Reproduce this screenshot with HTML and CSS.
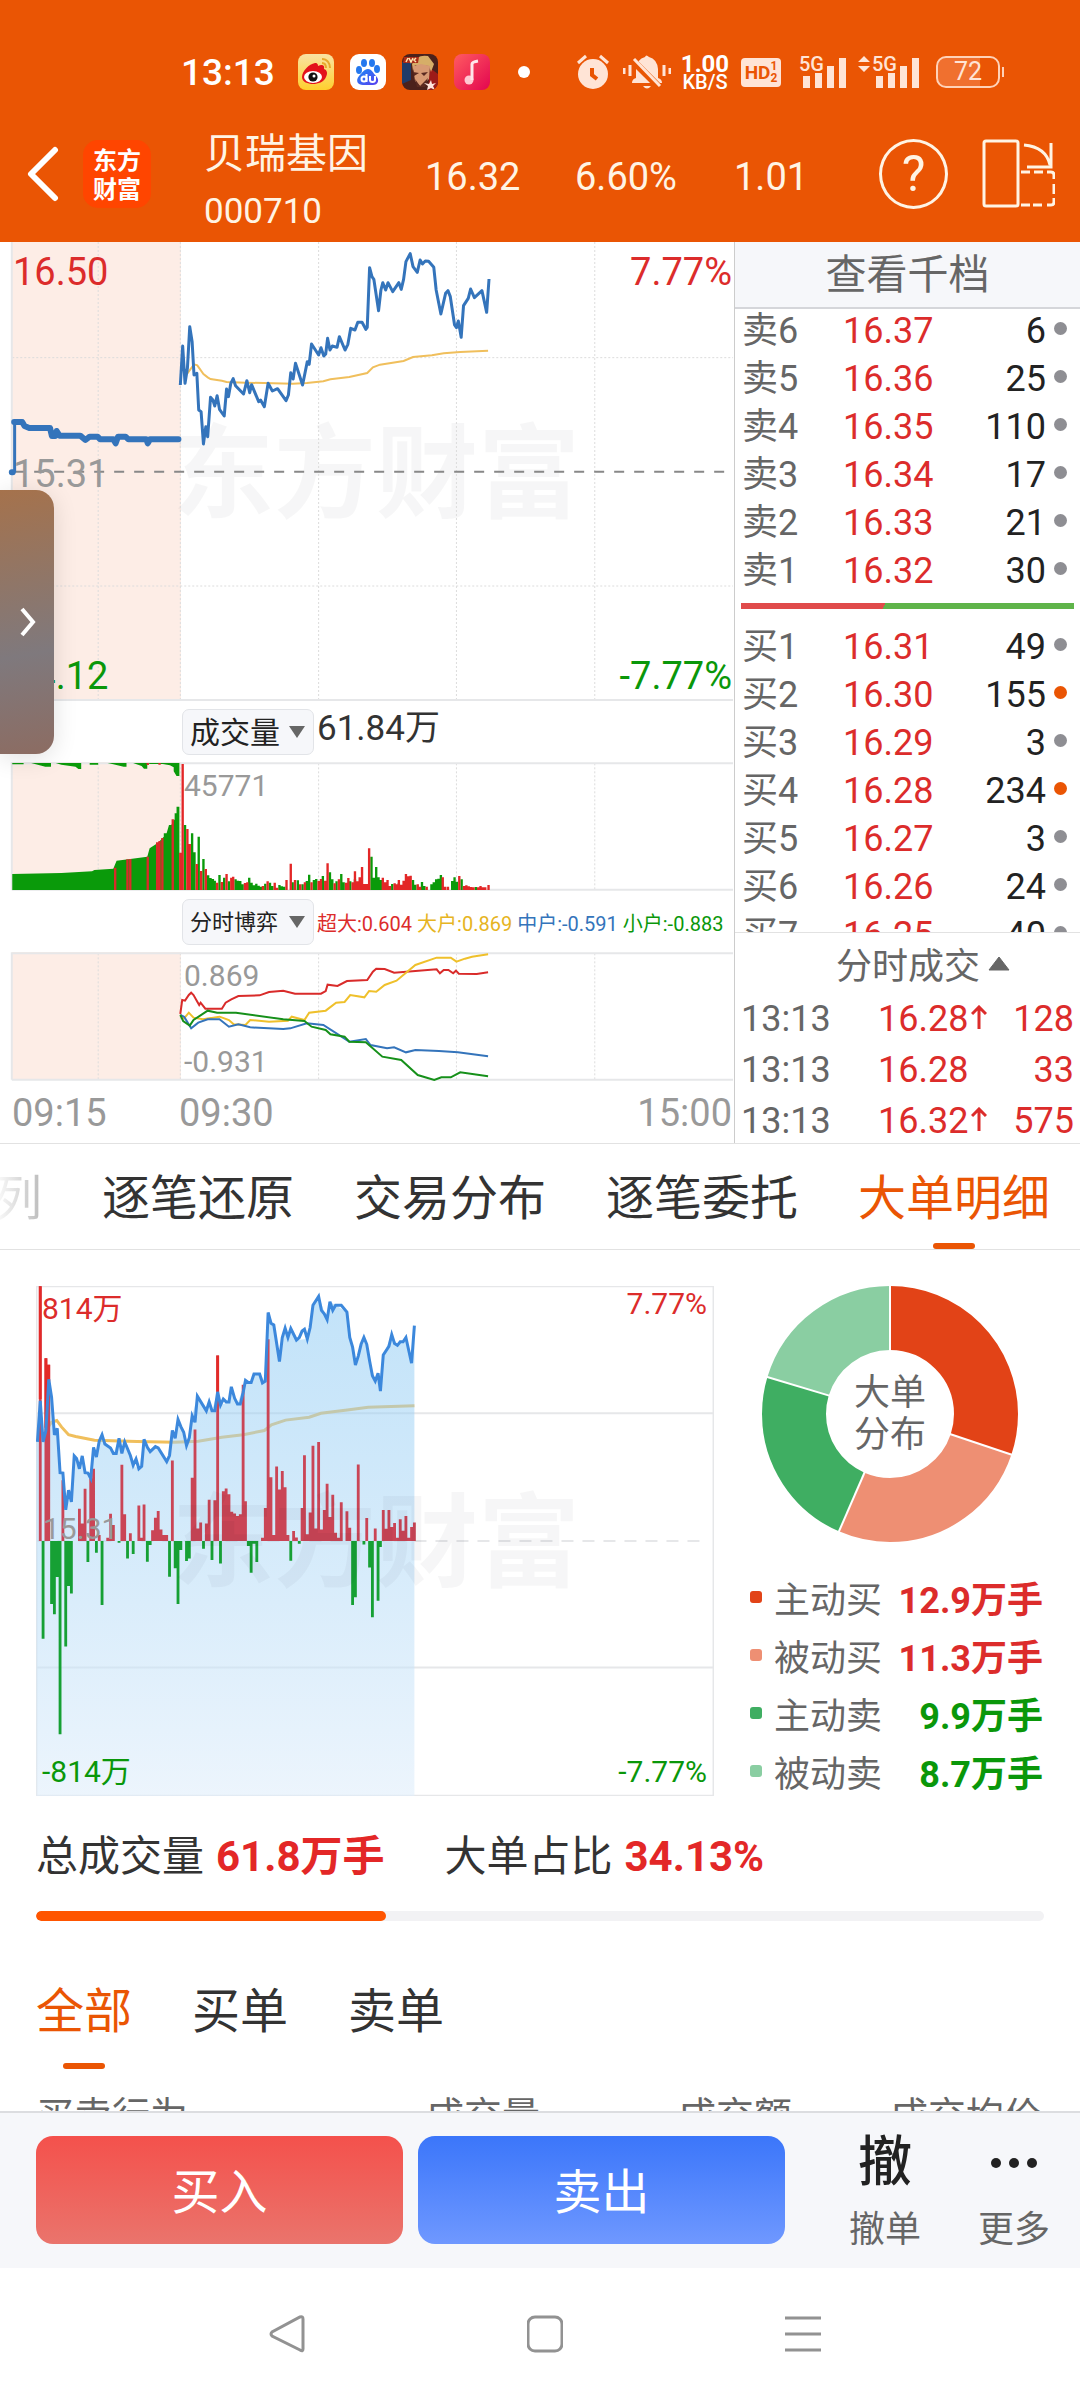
FILE: index.html
```html
<!DOCTYPE html>
<html lang="zh-CN">
<head>
<meta charset="utf-8">
<meta name="viewport" content="width=device-width">
<title>贝瑞基因 000710</title>
<link rel="stylesheet" href="styles.css">
</head>
<body>
<header class="top">
  <div class="status">
    <span class="clock">13:13</span>
    <div class="apps">
      <svg width="36" height="36" viewBox="0 0 36 36"><defs><linearGradient id="wb" x2="0" y2="1"><stop stop-color="#f9e3a4"/><stop offset="1" stop-color="#ffd02e"/></linearGradient></defs><rect width="36" height="36" rx="8" fill="url(#wb)"/><path d="M4 23c0-6 7-13 13-14 3 0 3 2 3 3 4-2 7-1 6 3 3 1 4 4 2 8-2 5-8 7-13 7S4 28 4 23z" fill="#e3121b"/><ellipse cx="15" cy="23" rx="9" ry="6" fill="#fff"/><circle cx="15" cy="23" r="4.600" fill="#111"/><circle cx="16" cy="22" r="1.500" fill="#fff"/><path d="M24 5c5 0 8 4 8 9M24 9c3 0 4 2 4 5" fill="none" stroke="#e8a92c" stroke-width="2"/></svg>
      <svg width="36" height="36" viewBox="0 0 36 36"><defs><linearGradient id="bd" x1="0" x2="1" y2="1"><stop stop-color="#1b8af5"/><stop offset="1" stop-color="#5a3df0"/></linearGradient></defs><rect width="36" height="36" rx="9" fill="#fff"/><g fill="#2478ee"><ellipse cx="9" cy="16" rx="3" ry="4"/><ellipse cx="14" cy="9" rx="3" ry="4"/><ellipse cx="22" cy="9" rx="3" ry="4"/><ellipse cx="27" cy="15" rx="3" ry="4"/></g><path d="M18 15c4 0 5 4 8 7 4 4 2 9-3 9H13c-5 0-8-4-4-9 3-3 5-7 9-7z" fill="url(#bd)"/><g fill="none" stroke="#fff" stroke-width="2"><circle cx="14" cy="25" r="2.500"/><path d="M16.500 20v8M20 22v4q0 2 2.500 2t2.500-2v-4"/></g></svg>
      <svg width="36" height="36" viewBox="0 0 36 36"><defs><clipPath id="hc"><rect width="36" height="36" rx="8"/></clipPath></defs><g clip-path="url(#hc)"><rect width="36" height="36" fill="#4b211b"/><path d="M0 8h9v18L0 30z" fill="#203b68"/><path d="M28 14l8 6v16H26z" fill="#9d1b18"/><path d="M10 10Q15 0 26 2l6 8-3 8-2-6-14-1-2 6z" fill="#d6ae68"/><path d="M11 12l8-2 9 2-1 13-8 8-6-6z" fill="#d79a74"/><path d="M11 18l6 1-5 3zM19 19l7-1-4 4zM17 28h6M13 25l5 7 8-8-3 9h-8z" fill="#5a2a20"/><path d="M2 3h15l-1 6H1z" fill="#a92b18"/><path d="M4 8l2-4M7 4l2 4 2-4M14 4l-2 2 2 2" stroke="#ffe4ae" stroke-width="1.500" fill="none"/><path d="M29 26l1 4 4-1-3 3 2 4-4-2-4 2 1-4-4-3 5 1z" fill="#ffe5dc"/></g></svg>
      <svg width="36" height="36" viewBox="0 0 36 36"><defs><linearGradient id="mu" x2="1" y2="1"><stop stop-color="#ff5b61"/><stop offset="1" stop-color="#e3054f"/></linearGradient></defs><rect width="36" height="36" rx="8" fill="url(#mu)"/><circle cx="15" cy="26" r="4.500" fill="#ffc9d2"/><path d="M18 26V10q0-2 6-3" fill="none" stroke="#ffe6ea" stroke-width="3"/></svg>
    </div>
    <span class="more-dot"></span>
    <div class="signals">
      <svg width="32" height="36" viewBox="0 0 32 36"><circle cx="16" cy="20" r="15" fill="#ffe4d6"/><path d="M1 9l8-7M31 9l-8-7" stroke="#ffe4d6" stroke-width="3"/><path d="M15 14v7l5 4" fill="none" stroke="#e95503" stroke-width="4"/></svg>
      <svg width="48" height="36" viewBox="0 0 48 36"><path d="M9 29q0-4 4-5V15Q14 5 22 3q1-3 4 0 8 2 9 12v9q4 1 4 5zM20 32h8q-4 5-8 0z" fill="#ffe4d6"/><path d="M9 6l28 28" stroke="#e95503" stroke-width="7"/><path d="M11 5l26 27M1 14v6M7 11v11M41 11v11M47 14v6" stroke="#ffe4d6" stroke-width="3"/></svg>
      <span class="speed"><b>1.00</b><small>KB/S</small></span>
      <span class="hd">HD<span><i>1</i><i>2</i></span></span>
      <span class="cell"><em>5G</em><svg width="44" height="30" viewBox="0 0 44 30" fill="#ffe4d6"><path d="M0 18h7v12H0zM12 15h7v15h-7zM24 8h7v22h-7zM36 0h7v30h-7z"/></svg></span>
      <span class="cell cell-2"><svg class="updown" width="12" height="16" viewBox="0 0 12 16"><path d="M6 0l6 6H0zM6 16l6-6H0z" fill="#ffe4d6"/></svg><em>5G</em><svg width="44" height="30" viewBox="0 0 44 30" fill="#ffe4d6"><path d="M0 18h7v12H0zM12 15h7v15h-7zM24 8h7v22h-7zM36 0h7v30h-7z"/></svg></span>
      <span class="battery">72</span>
    </div>
  </div>
  <nav class="nav">
    <button class="back" aria-label="返回"><svg width="32" height="56" viewBox="0 0 32 56"><path d="M28 4L4 28l24 24" fill="none" stroke="#fff" stroke-width="6" stroke-linecap="round" stroke-linejoin="round"/></svg></button>
    <span class="brand">东方<br>财富</span>
    <h1 class="stock">贝瑞基因<span>000710</span></h1>
    <span class="fig">16.32</span>
    <span class="fig">6.60%</span>
    <span class="fig">1.01</span>
    <button class="help" aria-label="帮助">?</button>
    <button aria-label="横屏"><svg width="73" height="70" viewBox="0 0 73 70" fill="none" stroke="#fff4e4" stroke-width="3"><rect x="2" y="2" width="34" height="65" rx="2"/><path d="M42 6q22 2 26 20M69 4v24H45"/><path d="M39 33h9M52 33h9M65 33h4q3 0 3 3v4M72 45v10M72 59v4q0 3-3 3h-4M60 66h-9M48 66h-9"/></svg></button>
  </nav>
</header>

<main>
<section class="quote">
  <div class="charts">
    <div class="chart price">
      <span class="shade"></span>
      <span class="mark">东方财富</span>
      <svg viewBox="0 6 1555 1380" preserveAspectRatio="none">
        <path class="grid dots" d="M208 6V1380M382 6V1380M675 6V1380M967 6V1380M1260 6V1380M26 353H1553M26 1038H1553"/>
        <path class="grid" d="M25 6V1380H1553"/>
        <path d="M30 695H1553" class="base"/>
        <path class="avg" d="M397 400L411 373L418 376L431 402L440 412L446 417L470 422L480 426L520 428L620 431L650 429L685 424L700 418L740 411L778 399L790 382L805 374L855 363L875 351L915 346L940 340L975 336L1034 332"/>
        <path class="blue w2" d="M382 435L387 318L392 430L397 385L402 260L407 305L411 405L417 400L421 510L426 515L431 612L436 560L440 590L446 472L451 480L455 498L460 467L465 508L475 528L480 447L484 470L489 430L494 416L499 437L516 462L523 422L529 458L533 434L548 485L552 480L560 500L568 430L577 453L588 446L606 482L611 465L616 398L621 417L626 370L641 435L651 365L655 373L660 312L675 345L680 323L686 348L690 342L694 295L699 330L704 318L714 322L719 290L731 330L737 313L743 265L752 270L758 247L767 247L775 268L778 262L783 83L788 110L792 118L802 212L807 150L811 128L817 150L822 128L832 155L845 128L850 148L855 118L860 65L869 41L875 80L884 97L890 60L895 72L901 63L908 64L919 82L924 150L934 222L944 160L949 152L954 170L963 255L967 263L971 243L977 292L982 197L992 175L997 147L1005 173L1021 152L1031 217L1036 117"/>
        <path class="blue w2" d="M31 697V546"/>
        <path class="blue w6" d="M25 697H27M30 546H47L52 558L62 564H106L110 588H117L120 573L126 587H170L181 600L190 590H207L212 598H240L245 610L250 590H266L272 598H310L313 610L318 598H378"/>
      </svg>
      <span class="lbl red tl">16.50</span><span class="lbl red tr">7.77%</span>
      <span class="lbl gray ml">15.31</span>
      <span class="lbl green bl">14.12</span><span class="lbl green br">-7.77%</span>
    </div>
    <div class="ind">
      <label class="pick"><select aria-label="指标一"><option>成交量</option></select></label>
      <span class="vol-value">61.84万</span>
    </div>
    <div class="chart sub">
      <span class="shade"></span>
      <svg viewBox="0 216 1555 390" preserveAspectRatio="none">
        <path class="grid dots" d="M208 220V598M382 220V598M675 220V598M967 220V598M1260 220V598"/>
        <path class="grid" d="M25 600V220H1553M25 599H1553"/>
        <path fill="#0a9a0a" d="M26 600V552L130 549L195 544L200 540L240 536L247 512L280 506L312 500L317 475L335 458L347 440V430H353L358 405H363L370 388V370H374V350H380V600zM26 219H50V223H26zM66 219H108V230H96L80 224zM118 219H172V237H166L160 230L130 224zM190 219H208V224H190zM228 219H268V230H262L240 223zM282 219H312V236H305L300 228zM316 219H380V258H374L368 244V232L360 226L345 222H316z"/>
        <path stroke="#d92b2a" stroke-width="5" d="M244 600V533M270 600V508M276 600V507M313 600V500M333 600V457M338 600V453M344 600V444M366 600V388M313 219V225M338 219V224"/>
        <path stroke="#0a9a0a" stroke-width="5" d="M392 600V405M407 600V430M412 600V487M421 600V440M431 600V507M441 600V556M446 600V564M451 600V567M455 600V572M465 600V555M475 600V563M485 600V574M499 600V568M504 600V572M509 600V573M514 600V583M528 600V563M533 600V578M538 600V586M543 600V581M548 600V587M553 600V590M562 600V581M572 600V578M577 600V588M592 600V585M597 600V589M602 600V590M620 600V577M631 600V571M641 600V583M650 600V573M655 600V554M665 600V570M670 600V567M684 600V558M699 600V547M704 600V568M713 600V574M723 600V552M728 600V577M742 600V574M752 600V568M787 600V500M792 600V563M797 600V531M802 600V562M807 600V570M831 600V582M845 600V580M875 600V570M880 600V584M894 600V576M899 600V588M914 600V583M919 600V577M924 600V568M929 600V566M934 600V555M958 600V573M963 600V562M968 600V575M978 600V568M1008 600V591"/>
        <path stroke="#e32727" stroke-width="5" d="M382 600V488M387 600V222M397 600V417M402 600V462M417 600V522M426 600V543M436 600V537M460 600V578M470 600V576M480 600V552M490 600V563M494 600V560M519 600V579M524 600V577M557 600V588M567 600V574M582 600V578M587 600V593M607 600V570M616 600V521M625 600V570M636 600V583M646 600V577M660 600V577M675 600V573M680 600V567M689 600V572M694 600V520M709 600V580M718 600V568M733 600V578M738 600V564M747 600V577M752 600V544M757 600V574M762 600V562M767 600V531M772 600V582M777 600V582M782 600V475M811 600V563M816 600V577M821 600V570M826 600V588M836 600V580M841 600V583M845 600V570M850 600V584M855 600V572M860 600V552M865 600V559M870 600V557M885 600V583M890 600V590M904 600V590M938 600V562M943 600V590M949 600V590M973 600V558M983 600V588M988 600V586M993 600V589M998 600V591M1003 600V592M1013 600V592M1018 600V588M1023 600V592M1028 600V592M1035 600V585"/>
      </svg>
      <span class="tag hi">45771</span>
    </div>
    <div class="ind">
      <label class="pick narrow"><select aria-label="指标二"><option>分时博弈</option></select></label>
      <span class="flow"><span class="red">超大:0.604</span><span class="yellow">大户:0.869</span><span class="bluet">中户:-0.591</span><span class="green">小户:-0.883</span></span>
    </div>
    <div class="chart sub">
      <span class="shade"></span>
      <svg viewBox="0 786 1555 390" preserveAspectRatio="none">
        <path class="grid dots" d="M208 790V1168M382 790V1168M675 790V1168M967 790V1168M1260 790V1168"/>
        <path class="grid" d="M25 1169V790H1553M25 1169H1553"/>
        <g class="w2" fill="none">
        <path stroke="#d92b2a" d="M382 972L386 930L392 932L400 915L405 908L410 915L418 935L422 945L425 938L435 956H470L478 938L490 928L505 918L550 916L570 906L600 902L625 911H680L690 903L694 884L715 888L735 873L778 870L790 845L797 836L815 837L835 848L880 843L925 838L932 850L940 840H950L960 850L966 842L972 851L1010 852L1034 847"/>
        <path stroke="#efc02b" d="M382 975L390 985L400 968L410 983L430 988L465 980L485 990L495 1003L520 1005L530 990L570 995L610 992L618 980L645 990L655 968L690 962L712 938L730 936L742 915L772 922L782 903L797 905L815 885L840 872L880 825L925 803H955L967 815L985 806L1000 800L1034 793"/>
        <path stroke="#3474bb" d="M382 975L390 980L405 1015L420 998L440 988L465 988L485 1010L505 1003L530 1012L600 1017L615 1015L650 1000L685 1005L740 1055L775 1047L785 1065L820 1075L835 1072L860 1087L880 1080L930 1083L970 1087L1034 1099"/>
        <path stroke="#16901a" d="M382 975L388 993L402 1007L410 990L440 962L460 968H500L600 988L645 993L660 1010L690 1020L700 1033L730 1040L740 1055L775 1057L810 1100L850 1110L885 1155L920 1170L935 1162H955L975 1147L1034 1159"/>
        </g>
      </svg>
      <span class="tag hi">0.869</span><span class="tag lo">-0.931</span>
    </div>
    <div class="times"><span>09:15</span><span>09:30</span><span>15:00</span></div>
  </div>
  <aside class="book">
    <button class="depth">查看千档</button>
    <div class="levels">
      <table>
        <tr><th>卖6</th><td>16.37</td><td>6</td></tr>
        <tr><th>卖5</th><td>16.36</td><td>25</td></tr>
        <tr><th>卖4</th><td>16.35</td><td>110</td></tr>
        <tr><th>卖3</th><td>16.34</td><td>17</td></tr>
        <tr><th>卖2</th><td>16.33</td><td>21</td></tr>
        <tr><th>卖1</th><td>16.32</td><td>30</td></tr>
      </table>
      <div class="ratio"></div>
      <table>
        <tr><th>买1</th><td>16.31</td><td>49</td></tr>
        <tr class="hot"><th>买2</th><td>16.30</td><td>155</td></tr>
        <tr><th>买3</th><td>16.29</td><td>3</td></tr>
        <tr class="hot"><th>买4</th><td>16.28</td><td>234</td></tr>
        <tr><th>买5</th><td>16.27</td><td>3</td></tr>
        <tr><th>买6</th><td>16.26</td><td>24</td></tr>
        <tr><th>买7</th><td>16.25</td><td>40</td></tr>
      </table>
    </div>
    <button class="ticks-head">分时成交<svg width="22" height="15" viewBox="0 0 22 15"><path d="M11 1l10 13H1z" fill="#666" stroke="#666" stroke-linejoin="round"/></svg></button>
    <table class="ticks">
      <tr><th>13:13</th><td>16.28<svg width="16" height="24" viewBox="0 0 16 24"><path d="M8 24V3M1 9l7-7 7 7"/></svg></td><td>128</td></tr>
      <tr><th>13:13</th><td>16.28</td><td>33</td></tr>
      <tr><th>13:13</th><td>16.32<svg width="16" height="24" viewBox="0 0 16 24"><path d="M8 24V3M1 9l7-7 7 7"/></svg></td><td>575</td></tr>
    </table>
  </aside>
  <button class="drawer" aria-label="展开"><svg width="18" height="30" viewBox="0 0 18 30"><path d="M3 2l11 13L3 28" fill="none" stroke="#fff" stroke-width="4"/></svg></button>
</section>

<div class="tabs">
  <button class="faded">列</button><button>逐笔还原</button><button>交易分布</button><button>逐笔委托</button><button class="on">大单明细</button>
</div>

<section class="orders">
  <div class="orders-top">
    <div class="chart big">
      <svg viewBox="76 74 1437 1426" preserveAspectRatio="none">
        <defs><linearGradient id="area" x2="0" y2="1"><stop stop-color="#86c7f3" stop-opacity=".5"/><stop offset="1" stop-color="#e0eefb" stop-opacity=".6"/></linearGradient></defs>
        <path class="grid" d="M77 430H1513M77 1141H1513"/>
        <path class="grid" stroke-dasharray="12 9" d="M77 787H1500"/>
        <path class="grid" d="M77 75H1512V1499H77z"/>
        <path class="avg w3" d="M97 478L109 455L120 450L130 468L145 490L160 495L200 505L290 509L370 511L420 508L470 497L515 490L560 478L575 462L605 449L655 441L680 430L740 420L780 413L878 409"/>
        <path fill="url(#area)" d="M77 1500V510L85 395L91 510L103 335L109 385L115 490L121 472L127 596H133L139 700L145 645L151 678L157 549L168 585L174 549L180 596L192 612L198 525L204 552L216 490L222 516L240 542L252 500L258 542L264 510L282 575L294 585L305 503L318 537L329 523L353 565L365 478L371 500L377 447L395 520L407 437L418 382L437 423L443 398L449 423L461 370L467 407L485 398L490 356L503 404L520 338L532 345L538 320H550L562 340L568 148L580 183L592 285L604 192L610 218L616 193L628 225L651 222L663 128L675 103L693 168L699 118L711 128L735 147L753 295L771 218L795 340L801 318L806 368L812 267L830 210L842 240L860 218L872 290L878 185V1500z"/>
        <path stroke="#ca4556" stroke-width="6" d="M85 787V75M97 787V276M103 787V294M133 787V617M168 787V697M174 787V738M180 787V641M192 787V612M198 787V585M210 787V770M228 787V778M234 787V711M240 787V742M258 787V574M264 787V712M276 787V765M294 787V688M300 787V778M305 787V685M323 787V757M329 787V722M335 787V703M341 787V755M347 787V770M353 787V770M365 787V562M407 787V610M413 787V475M419 787V752M425 787V735M437 787V738M443 787V672M455 787V673M461 787V268M473 787V648M479 787V640M485 787V656M491 787V705M497 787V710M503 787V717M509 787V712M515 787V350M520 787V676M556 787V778M562 787V695M568 787V223M574 787V609M580 787V770M586 787V579M592 787V643M598 787V591M604 787V637M610 787V770M622 787V759M628 787V777M640 787V695M645 787V547M651 787V768M657 787V707M663 787V521M669 787V752M675 787V510M681 787V755M687 787V700M693 787V627M699 787V720M705 787V658M711 787V764M717 787V778M723 787V679M735 787V704M741 787V750M759 787V573M777 787V723M795 787V752M812 787V700M818 787V753M824 787V700M830 787V748M836 787V737M842 787V778M848 787V726M854 787V758M860 787V717M866 787V778M872 787V748M878 787V735"/>
        <path stroke="#e32a28" stroke-width="6" d="M85 390V75M97 470V276M103 340V294M461 370V268"/>
        <path stroke="#16a034" stroke-width="6" d="M91 787V1060M109 787V963M115 787V992M121 787V888M127 787V1327M139 787V1082M145 787V913M151 787V934M186 787V846M204 787V820M216 787V966M252 787V792M270 787V836M282 787V823M312 787V845M318 787V798M359 787V887M371 787V863M377 787V963M383 787V812M395 787V843M401 787V836M431 787V809M449 787V840M467 787V850M526 787V801M532 787V876M538 787V795M544 787V846M616 787V842M634 787V795M747 787V966M753 787V944M771 787V797M783 787V861M789 787V1000M801 787V954M806 787V804"/>
        <path class="blue2" d="M79 510L85 395L91 510L97 478L103 335L109 385L115 490L121 472L127 596L133 597L139 700L145 645L151 678L157 549L162 556L168 585L174 549L180 596L186 597L192 612L198 525L204 552L210 508L216 490L222 516L234 527L240 542H246L252 500L258 542L264 510L276 548L282 575L288 558L294 585L300 578L305 503L312 525L318 537L329 523L335 527L353 565L359 548L365 478L371 500L377 447L383 467L389 483L395 520L401 498L407 437L413 455L418 382L437 423L443 398L449 423H455L461 370L467 407L473 390L479 398H485L490 356L497 388L503 404H509L515 372L520 338L526 344H532L538 320H550L556 345L562 340L568 148L574 178L580 183L592 285L598 218L604 192L610 218L616 193L628 225L634 218L640 200L645 195L651 222L657 190L663 128L675 103L681 142L687 152L693 168L699 118L705 142L711 128H723L735 147L741 218L747 245L753 295L759 270L765 237L771 218L777 237L783 283L789 325L795 340L801 318L806 368L812 267L824 243L830 210L836 235L842 240L848 230H854L860 218L872 290L878 185"/>
      </svg>
      <span class="mark">东方财富</span>
      <span class="lbl red tl">814万</span><span class="lbl red tr">7.77%</span>
      <span class="lbl gray ml">15.31</span>
      <span class="lbl green bl">-814万</span><span class="lbl green br">-7.77%</span>
    </div>
    <aside class="share">
      <div class="donut">
        <svg width="256" height="256" viewBox="-128 -128 256 256" fill="none" stroke-width="64">
          <g transform="rotate(-90)">
            <circle r="96" pathLength="428" stroke="#e24317" stroke-dasharray="129 299"/>
            <circle r="96" pathLength="428" stroke="#ee8f73" stroke-dasharray="113 315" stroke-dashoffset="-129"/>
            <circle r="96" pathLength="428" stroke="#3fae62" stroke-dasharray="99 329" stroke-dashoffset="-242"/>
            <circle r="96" pathLength="428" stroke="#8acea2" stroke-dasharray="87 341" stroke-dashoffset="-341"/>
          </g>
          <g stroke="#fff" stroke-width="2"><path d="M0-60V-130"/><path d="M0-60V-130" transform="rotate(108.500)"/><path d="M0-60V-130" transform="rotate(203.500)"/><path d="M0-60V-130" transform="rotate(286.800)"/></g>
        </svg>
        <span>大单<br>分布</span>
      </div>
      <ul>
        <li class="k1"><span>主动买</span><b class="red">12.9万手</b></li>
        <li class="k2"><span>被动买</span><b class="red">11.3万手</b></li>
        <li class="k3"><span>主动卖</span><b class="green">9.9万手</b></li>
        <li class="k4"><span>被动卖</span><b class="green">8.7万手</b></li>
      </ul>
    </aside>
  </div>
  <div class="sum"><span>总成交量<b>61.8万手</b></span><span>大单占比<b>34.13%</b></span></div>
  <progress value="347" max="1000" aria-label="大单占比"></progress>
  <div class="filters"><button class="on">全部</button><button>买单</button><button>卖单</button></div>
  <table class="detail"><thead><tr><th>买卖行为</th><th>成交量</th><th>成交额</th><th>成交均价</th></tr></thead></table>
</section>
</main>

<footer>
  <div class="trade">
    <button class="buy">买入</button>
    <button class="sell">卖出</button>
    <div class="tools">
      <button><strong>撤</strong>撤单</button>
      <button><strong><svg width="48" height="12" viewBox="0 0 48 12" fill="#222"><circle cx="6" cy="6" r="5"/><circle cx="24" cy="6" r="5"/><circle cx="42" cy="6" r="5"/></svg></strong>更多</button>
    </div>
  </div>
  <div class="sys">
    <button aria-label="返回"><svg width="36" height="38" viewBox="0 0 36 38"><path d="M31 2q3-1 3 2v30q0 3-3 1L3 21q-2-2 0-4z"/></svg></button>
    <button aria-label="主页"><svg width="36" height="38" viewBox="0 0 36 38"><rect x="1" y="2" width="34" height="34" rx="7"/></svg></button>
    <button aria-label="任务"><svg width="36" height="38" viewBox="0 0 36 38"><path d="M0 3h36M0 19h36M0 35h36"/></svg></button>
  </div>
</footer>
</body>
</html>
```
FILE: styles.css
```css
* { box-sizing: border-box; }
body {
  margin: 0;
  height: 100vh;
  display: flex;
  flex-direction: column;
  background: #fff;
  color: #333;
  font-family: Roboto, "Noto Sans CJK SC", sans-serif;
  overflow: hidden;
}
button, select { font: inherit; color: inherit; border: 0; padding: 0; margin: 0; background: none; white-space: nowrap; }
svg { display: block; }
table { width: 100%; border-collapse: collapse; table-layout: fixed; }
th, td { padding: 0; font-weight: 400; text-align: left; }
.red { color: #dc2c2b; }
.green { color: #0a970a; }
.gray { color: #999; }
.yellow { color: #e6b422; }
.bluet { color: #3474bb; }

/* status bar and title bar */
.top { flex: none; background: #ea5504; color: #fff4e4; }
.status { display: flex; align-items: center; height: 106px; padding: 38px 80px 0 181px; }
.clock { font-size: 37px; font-weight: 500; color: #fff; width: 117px; }
.apps { display: flex; gap: 16px; }
.more-dot { width: 12px; height: 12px; border-radius: 50%; background: #fff; margin-left: 28px; }
.signals { display: flex; align-items: center; margin-left: auto; color: #ffe4d6; }
.signals > :nth-child(2) { margin-left: 14px; }
.speed { display: flex; flex-direction: column; align-items: center; margin-left: 9px; width: 50px; color: #fff; }
.speed b { font-size: 24px; line-height: 20px; font-weight: 700; }
.speed small { font-size: 20px; line-height: 16px; font-weight: 500; }
.hd { display: flex; align-items: center; justify-content: center; width: 40px; height: 29px; margin-left: 11px; border-radius: 4px; background: #ffe4d6; color: #ea5504; font-size: 19px; font-weight: 700; }
.hd span { display: flex; flex-direction: column; }
.hd i { font-size: 12px; line-height: 12px; font-style: normal; }
.cell { position: relative; display: flex; align-items: flex-end; height: 32px; padding-left: 4px; margin-left: 18px; }
.cell em { position: absolute; left: 0; top: -2px; font: 500 20px/20px Roboto; }
.cell-2 { margin-left: 11px; padding-left: 18px; }
.cell-2 em { left: 14px; }
.updown { position: absolute; left: 0; top: 0; }
.battery { position: relative; width: 64px; height: 32px; margin-left: 16px; border: 2px solid #ffd2b8; border-radius: 10px; background: linear-gradient(90deg, #f0702f 70%, #ea5504 70%); font-size: 25px; line-height: 28px; text-align: center; }
.battery::after { content: ""; position: absolute; right: -6px; top: 9px; width: 2px; height: 10px; background: #ffd2b8; }
.nav { display: grid; grid-template-columns: 56px 121px 221px 150px 159px 1fr auto auto; align-items: center; height: 136px; padding: 0 25px 0 27px; font-size: 38px; }
.nav button:last-child { margin-left: 34px; }
.fig { padding-top: 5px; }
.brand { width: 68px; height: 68px; border-radius: 15px; background: #ff4500; color: #fff; font: 700 24px/29px "Noto Sans CJK SC", sans-serif; text-align: center; padding-top: 4px; }
.stock { margin: 0; padding-top: 17px; font-size: 41px; line-height: 58px; font-weight: 400; }
.stock span { display: block; font-size: 35px; }
.help { width: 69px; height: 70px; border: 3px solid #fff4e4; border-radius: 50%; font-size: 50px; line-height: 60px; }

main { flex: 1; min-height: 0; overflow: hidden; }

/* quote */
.quote { position: relative; display: grid; grid-template-columns: 734fr 346fr; border-bottom: 1px solid #e2e2e2; }
.charts { min-width: 0; }
.chart { position: relative; }
.chart > svg { position: relative; width: 100%; height: 100%; }
.price { height: 460px; }
.sub { height: 130px; }
.shade { position: absolute; left: 12px; top: 0; bottom: 2px; width: 169px; background: #fdede6; }
.chart .grid, .base, .avg, .blue, .blue2, .w2 path { fill: none; vector-effect: non-scaling-stroke; }
.chart .grid { stroke: #e6e7e9; stroke-width: 2px; }
.chart .dots { stroke: #dcdcdc; stroke-width: 1px; stroke-dasharray: 2 2; }
.base { stroke: #888; stroke-width: 2px; stroke-dasharray: 10 10; }
.avg { stroke: #f0bf5c; stroke-width: 2px; }
.avg.w3 { stroke-width: 3px; }
.blue { stroke: #3474bb; stroke-linejoin: round; }
.blue2 { stroke: #3c88dc; stroke-width: 3px; }
.w2 { stroke-width: 2px; }
.blue.w2 { stroke-width: 3px; }
.w6 { stroke-width: 6px; stroke-linecap: round; }
.mark { position: absolute; left: 0; right: 0; top: 50%; margin-left: 18px; text-align: center; font: 700 102px/120px "Noto Sans CJK SC", sans-serif; margin-top: -66px; color: rgba(0, 0, 40, .035); }
.lbl { position: absolute; font-size: 38px; line-height: 44px; }
.tl { left: 13px; top: 8px; }
.tr { right: 2px; top: 8px; }
.ml { left: 13px; top: 210px; }
.bl { left: 13px; bottom: 4px; }
.br { right: 2px; bottom: 4px; }
.ind { display: flex; align-items: center; gap: 3px; height: 60px; padding-left: 182px; white-space: nowrap; }
.pick { position: relative; flex: none; }
.pick select { display: block; appearance: none; width: 132px; height: 46px; padding-left: 7px; border: 1px solid #e2e4e8; border-radius: 7px; background: #f6f7fa; color: #222; font-size: 30px; }
.pick::after { content: ""; position: absolute; right: 9px; top: 17px; border: 8px solid transparent; border-top: 12px solid #666; border-bottom: 0; }
.pick.narrow select { font-size: 22px; }
.vol-value { font-size: 35px; line-height: 48px; padding-bottom: 6px; }
.flow { display: flex; gap: 5px; font-size: 20px; }
.tag { position: absolute; left: 184px; font-size: 30px; line-height: 36px; color: #999; }
.hi { top: 6px; }
.lo { bottom: 2px; }
.times { display: grid; grid-template-columns: 167px 1fr auto; padding: 2px 2px 0 12px; font-size: 38px; line-height: 59px; color: #999; }

/* order book */
.book { display: flex; flex-direction: column; border-left: 1px solid #ccc; color: #666; font-size: 36px; }
.depth { flex: none; height: 67px; border-bottom: 2px solid #d5d6da; background: #f6f7fa; font-size: 41px; line-height: 60px; }
.levels { flex: 1 1 0; height: 0; min-height: 0; overflow: hidden; border-bottom: 1px solid #e2e2e2; }
.levels tr { height: 48px; line-height: 42px; }
.levels th { width: 108px; padding-left: 7px; }
.levels td { color: #dc2c2b; }
.levels td:last-child { color: #222; text-align: right; padding-right: 13px; white-space: nowrap; }
.levels td:last-child::after { content: ""; display: inline-block; width: 13px; height: 13px; border-radius: 50%; margin-left: 8px; vertical-align: 8px; background: #8e8e93; }
.levels .hot td:last-child::after { background: #ea5504; }
.levels table:first-child { margin-top: -2px; }
.ratio { height: 6px; margin: 8px 6px 14px; background: linear-gradient(120deg, #e04b4b 43%, #5fb44a 43%); }
.ticks-head { flex: none; display: flex; align-items: center; justify-content: center; gap: 8px; height: 60px; padding-left: 31px; }
.ticks { margin-bottom: -3px; }
.ticks tr { height: 51px; line-height: 44px; color: #dc2c2b; }
.ticks th { width: 143px; padding-left: 6px; color: #666; }
.ticks td:last-child { text-align: right; padding-right: 6px; width: 80px; }
.ticks svg { display: inline-block; margin-left: 3px; fill: none; stroke: #dc2c2b; stroke-width: 3px; vertical-align: 2px; }
.drawer { position: absolute; left: 0; top: 248px; width: 54px; height: 264px; padding-left: 19px; border-radius: 0 18px 18px 0; background: linear-gradient(170deg, #a5724c, #7f797d 62%, #8c6c62); box-shadow: 0 4px 24px rgba(0,0,0,.12); }

/* tabs */
.tabs { display: flex; justify-content: flex-end; gap: 60px; height: 106px; padding-right: 30px; border-bottom: 1px solid #e2e2e2; overflow: hidden; font-size: 48px; }
.tabs button, .filters button { position: relative; flex: none; }
.tabs button { padding-bottom: 5px; }
.on { color: #ea5504; }
.on::after { content: ""; position: absolute; left: 50%; bottom: 0; width: 42px; height: 6px; margin-left: -21px; border-radius: 3px; background: #ea5504; }
.tabs .faded { color: transparent; background: linear-gradient(90deg, #fff, #bbb); background-clip: text; }

/* large orders */
.orders { padding: 36px 36px 0; }
.orders-top { display: grid; grid-template-columns: 1fr 294px; gap: 36px; height: 516px; }
.big { height: 510px; }
.big .lbl { font-size: 30px; line-height: 36px; }
.big .tl { left: 6px; top: 5px; }
.big .tr { right: 7px; top: 0; }
.big .ml { left: 7px; top: 225px; }
.big .bl { left: 6px; bottom: 6px; }
.big .br { right: 7px; bottom: 6px; }
.big .mark { margin-left: 2px; }
.share { font-size: 36px; color: #666; }
.donut { position: relative; width: 256px; margin-left: 12px; }
.donut span { position: absolute; left: 0; right: 0; top: 86px; line-height: 42px; text-align: center; }
.share ul { list-style: none; margin: 26px 0 0; padding: 0 1px 0 0; }
.share li { display: flex; align-items: center; height: 58px; white-space: nowrap; }
.share li::before { content: ""; width: 12px; height: 12px; margin-right: 12px; border-radius: 3px; }
.k1::before { background: #e24317; }
.k2::before { background: #ee8f73; }
.k3::before { background: #3fae62; }
.k4::before { background: #8acea2; }
.share b { margin-left: auto; font-weight: 700; }
.sum { display: flex; gap: 60px; margin-top: 25px; font-size: 42px; line-height: 60px; }
.sum b { margin-left: 12px; color: #e32727; }
progress { display: block; appearance: none; width: 100%; height: 10px; margin-top: 24px; border-radius: 5px; overflow: hidden; }
progress::-webkit-progress-bar { background: #f2f2f4; }
progress::-webkit-progress-value { background: #ff5500; border-radius: 5px; }
.filters { display: flex; gap: 60px; margin-top: 56px; font-size: 48px; }
.filters button { height: 92px; line-height: 70px; padding-bottom: 22px; }
.detail { margin-top: 21px; color: #666; font-size: 38px; line-height: 52px; }
.detail th { text-align: right; white-space: nowrap; }
.detail th:nth-child(1) { text-align: left; }
.detail th:nth-child(4) { padding-right: 2px; }

/* trade bar */
footer { flex: none; }
.trade { display: flex; align-items: flex-start; height: 157px; padding: 23px 30px 0 36px; border-top: 2px solid #dcdde0; background: #f6f7fa; }
.buy, .sell { flex: 1; height: 108px; padding-bottom: 5px; border-radius: 17px; color: #fff; font-size: 48px; }
.buy { background: linear-gradient(#f4514c, #ea746c); margin-right: 15px; }
.sell { background: linear-gradient(#3b76fa, #6f98ff); }
.tools { display: flex; gap: 57px; margin-left: 64px; }
.tools button { width: 72px; font-size: 36px; line-height: 50px; color: #666; }
.tools strong { display: flex; align-items: center; justify-content: center; height: 54px; margin-bottom: 15px; font-size: 54px; font-weight: 500; color: #222; }
.sys { display: flex; align-items: center; justify-content: center; gap: 222px; height: 132px; padding-left: 10px; }
.sys svg { fill: none; stroke: #929292; stroke-width: 3px; }
```
